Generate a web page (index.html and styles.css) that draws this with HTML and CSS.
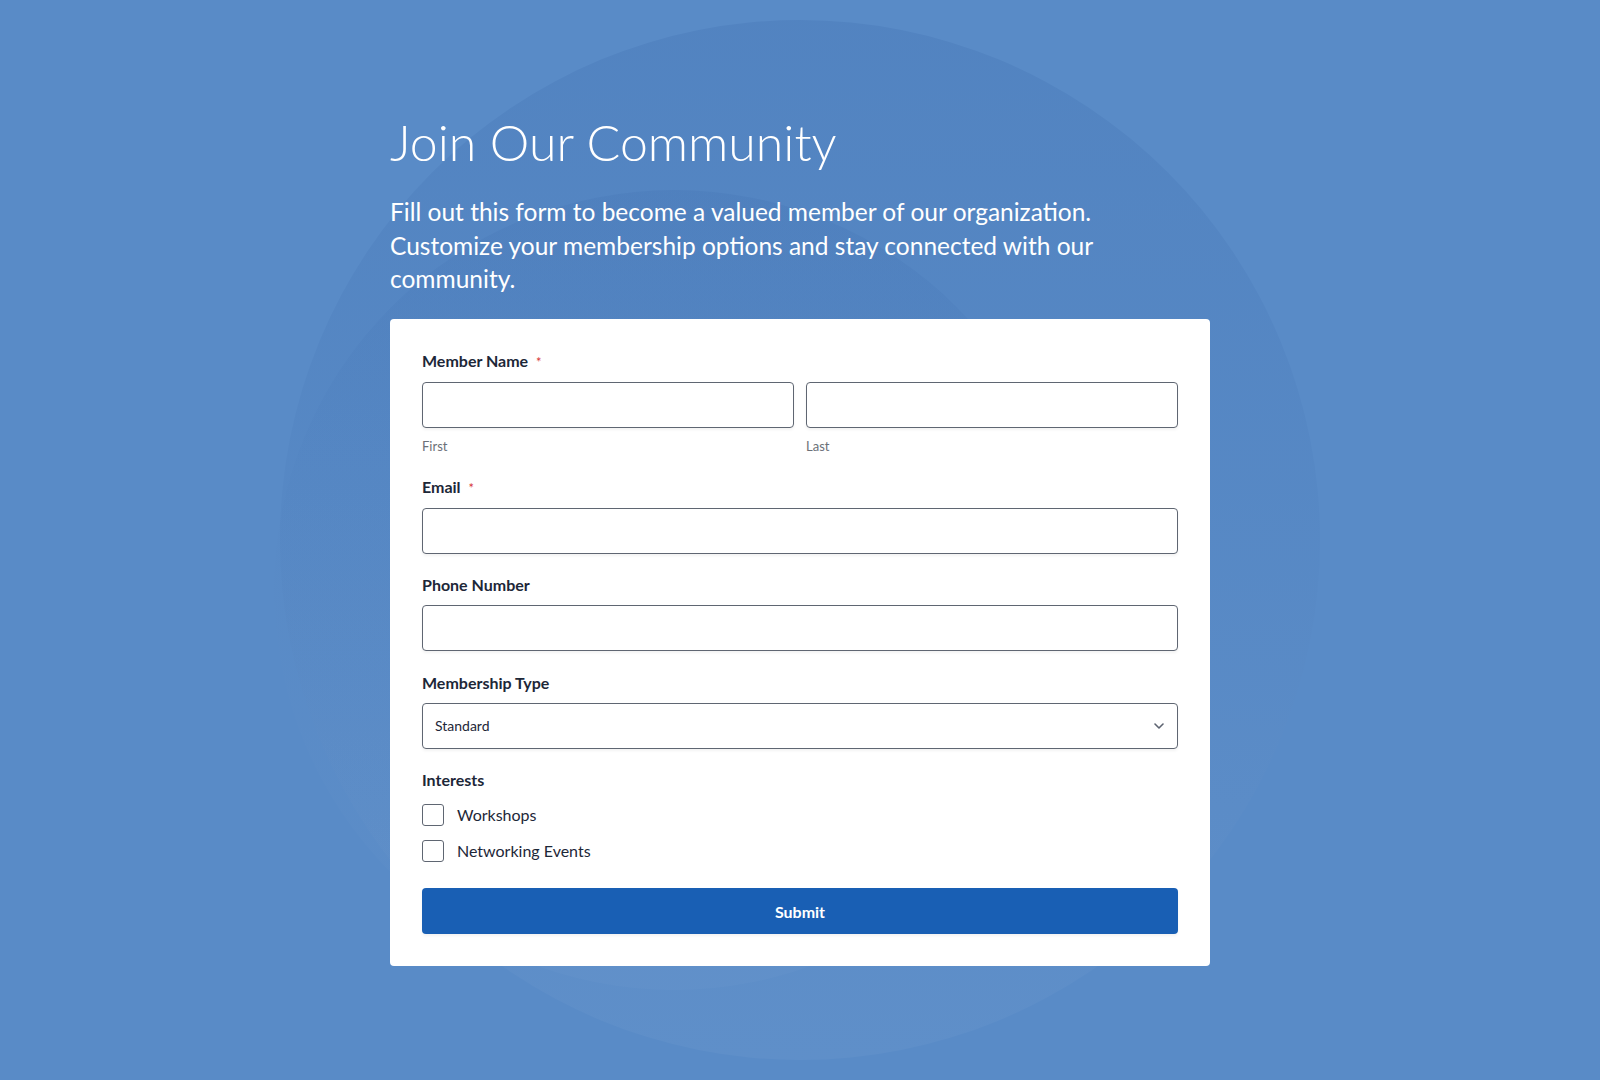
FILE: index.html
```html
<!DOCTYPE html>
<html lang="en">
<head>
<meta charset="utf-8">
<title>Join Our Community</title>
<link rel="stylesheet" href="styles.css">
</head>
<body>
<div class="bg" aria-hidden="true">
  <div class="ring ring-outer"></div>
  <div class="ring ring-inner"></div>
</div>
<main class="page">
  <h1 class="title">Join Our Community</h1>
  <p class="intro">Fill out this form to become a valued member of our organization. Customize your membership options and stay connected with our community.</p>
  <form class="card">
    <div class="field">
      <div class="label">Member Name <span class="req">*</span></div>
      <div class="name-row">
        <div class="name-col">
          <input class="input" type="text">
          <div class="sublabel">First</div>
        </div>
        <div class="name-col">
          <input class="input" type="text">
          <div class="sublabel">Last</div>
        </div>
      </div>
    </div>
    <div class="field">
      <div class="label">Email <span class="req">*</span></div>
      <input class="input" type="email">
    </div>
    <div class="field">
      <div class="label">Phone Number</div>
      <input class="input" type="tel">
    </div>
    <div class="field">
      <div class="label">Membership Type</div>
      <div class="select">
        <span class="select-value">Standard</span>
        <svg class="chevron" width="10" height="6" viewBox="0 0 10 6"><path d="M1 1l4 4 4-4" fill="none" stroke="#5c6370" stroke-width="1.6" stroke-linecap="round" stroke-linejoin="round"/></svg>
      </div>
    </div>
    <div class="field field-last">
      <div class="label label-interests">Interests</div>
      <div class="checks">
        <label class="check"><span class="box"></span><span>Workshops</span></label>
        <label class="check"><span class="box"></span><span>Networking Events</span></label>
      </div>
    </div>
    <button class="submit" type="button">Submit</button>
  </form>
</main>
</body>
</html>
```

FILE: styles.css
```css
* { box-sizing: border-box; }
html, body { margin: 0; padding: 0; }
body {
  min-height: 1080px;
  background: #598bc7;
  font-family: Lato, "Noto Sans", sans-serif;
  overflow: hidden;
  position: relative;
}
.bg {
  position: absolute;
  inset: 0;
  z-index: 0;
  overflow: hidden;
}
.ring {
  position: absolute;
  border-radius: 50%;
}
.ring-outer {
  left: 280px;
  top: 20px;
  width: 1040px;
  height: 1040px;
  background: linear-gradient(180deg, rgba(35, 80, 150, 0.13) 0%, rgba(35, 80, 150, 0.05) 45%, rgba(255, 255, 255, 0.035) 100%);
}
.ring-inner {
  left: 274px;
  top: 190px;
  width: 800px;
  height: 800px;
  background: linear-gradient(180deg, rgba(35, 80, 150, 0.09) 0%, rgba(35, 80, 150, 0.02) 35%, rgba(255, 255, 255, 0.02) 100%);
}
.page {
  position: relative;
  z-index: 1;
  width: 820px;
  margin: 0 auto;
  padding-top: 112px;
}
.title {
  margin: 0;
  font-weight: 300;
  font-size: 50px;
  line-height: 1.2;
  color: #fff;
}
.intro {
  max-width: 760px;
  margin: 23px 0 23px;
  font-size: 24.5px;
  line-height: 33.7px;
  font-weight: 400;
  color: #fff;
}
.card {
  background: #fff;
  border-radius: 4px;
  padding: 32px;
  display: flex;
  flex-direction: column;
}
.field { margin-bottom: 21.5px; }
.field-last { margin-bottom: 26px; }
.label {
  font-size: 16px;
  line-height: 20px;
  font-weight: 700;
  color: #1d2738;
  margin-bottom: 10px;
}
.label-interests { margin-bottom: 14px; }
.req {
  color: #d63638;
  font-size: 13px;
  font-weight: 400;
  margin-left: 4px;
}
.name-row {
  display: grid;
  grid-template-columns: 1fr 1fr;
  gap: 12px;
}
.input {
  display: block;
  width: 100%;
  height: 46px;
  border: 1px solid #5f6672;
  border-radius: 4px;
  background: #fff;
  box-shadow: 0 2px 3px rgba(0, 0, 0, 0.05);
  font: 400 16px Lato, sans-serif;
  padding: 0 12px;
  outline: none;
}
.sublabel {
  margin-top: 9px;
  font-size: 13px;
  line-height: 18px;
  color: #6b7078;
}
.select {
  height: 46px;
  border: 1px solid #5f6672;
  border-radius: 4px;
  box-shadow: 0 2px 3px rgba(0, 0, 0, 0.05);
  display: flex;
  align-items: center;
  justify-content: space-between;
  padding: 0 13px 0 12px;
}
.select-value {
  font-size: 14px;
  color: #1d2738;
}
.chevron { display: block; }
.checks {
  display: flex;
  flex-direction: column;
  gap: 14px;
}
.check {
  display: flex;
  align-items: center;
  gap: 13px;
  font-size: 16px;
  line-height: 22px;
  color: #1d2738;
}
.box {
  width: 22px;
  height: 22px;
  border: 1px solid #5f6672;
  border-radius: 3px;
  background: #fff;
  flex: none;
}
.submit {
  height: 46px;
  border: none;
  border-radius: 4px;
  background: #195fb4;
  color: #fff;
  font: 700 16px Lato, sans-serif;
  cursor: pointer;
  box-shadow: 0 2px 3px rgba(0, 0, 0, 0.05);
}
```
